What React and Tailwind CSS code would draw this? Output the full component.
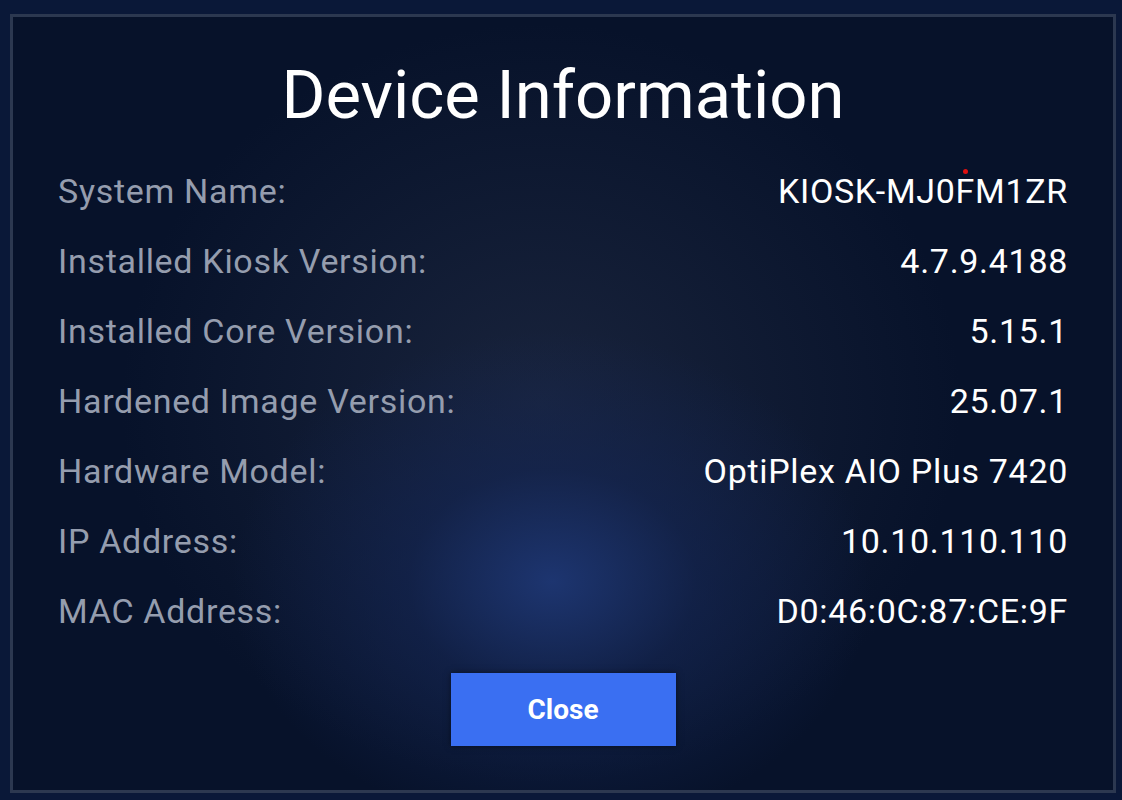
const rows = [
  ["System Name:", "KIOSK-MJ0FM1ZR"],
  ["Installed Kiosk Version:", "4.7.9.4188"],
  ["Installed Core Version:", "5.15.1"],
  ["Hardened Image Version:", "25.07.1"],
  ["Hardware Model:", "OptiPlex AIO Plus 7420"],
  ["IP Address:", "10.10.110.110"],
  ["MAC Address:", "D0:46:0C:87:CE:9F"],
];

export default function App() {
  return (
    <div className="w-[1122px] h-[800px] bg-[#0a1838] pt-[14px] pl-[10px] font-['Roboto',sans-serif]">
      <div className="relative w-[1106px] h-[779px] border-[3px] border-[#2c3850] bg-[#07122a] bg-[radial-gradient(ellipse_320px_250px_at_49%_73%,#1d3570_0%,rgba(20,38,85,0.6)_45%,rgba(7,18,42,0)_100%),radial-gradient(ellipse_420px_380px_at_48%_50%,rgba(40,50,75,0.55)_0%,rgba(7,18,42,0)_100%)] px-[45px] pt-[45px]">
        <h1 className="text-center text-[67px] leading-[66px] text-white">Device Information</h1>
        <div className="mt-[28px]">
          {rows.map(([label, value]) => (
            <div key={label} className="flex justify-between h-[70px] leading-[70px] text-[34px] tracking-[0.7px]">
              <span className="text-[#959dae]">{label}</span>
              <span className="text-white">{value}</span>
            </div>
          ))}
        </div>
        <div className="flex justify-center mt-[27px]">
          <button className="w-[225px] h-[73px] bg-[#3a6ff2] text-white font-bold text-[28px] shadow-[0_0_6px_rgba(0,0,0,0.5)]">
            Close
          </button>
        </div>
        {/* small red dot over the system name */}
        <span className="absolute left-[950px] top-[152px] w-[5px] h-[5px] rounded-full bg-[#e01010]" />
      </div>
    </div>
  );
}
